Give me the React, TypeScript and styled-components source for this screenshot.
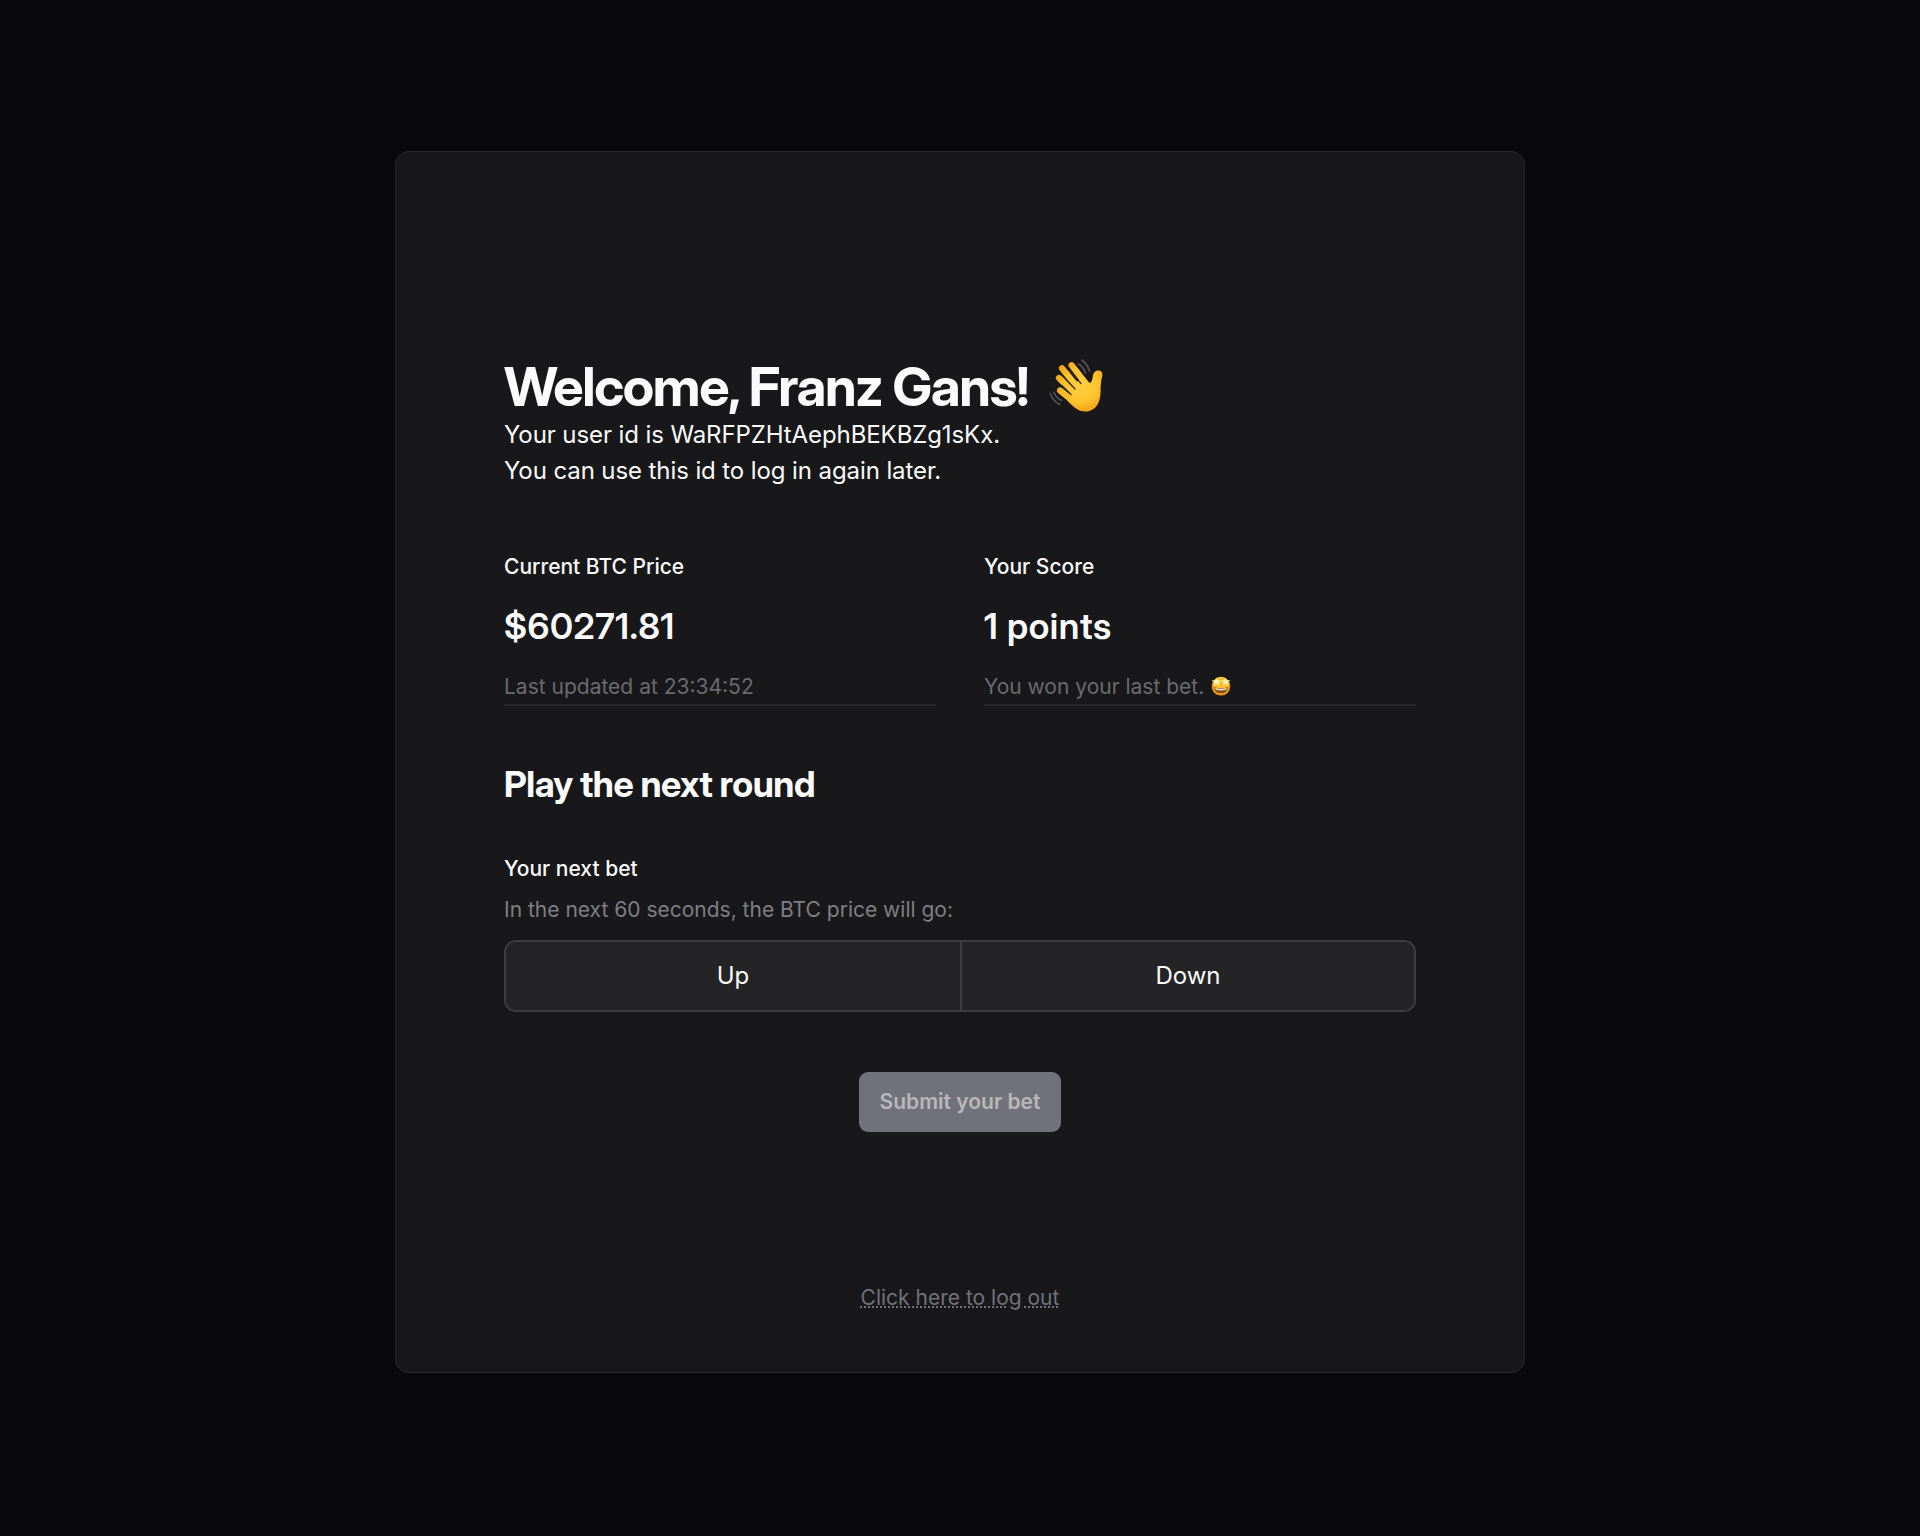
import React from "react";
import styled, { createGlobalStyle } from "styled-components";

const displayFont = `"Inter Display", Inter, "Liberation Sans", sans-serif`;

const GlobalStyle = createGlobalStyle`
  *, *::before, *::after { box-sizing: border-box; }
  body {
    margin: 0;
    background: #09090b;
    color: #fafafa;
    font-family: Inter, "Liberation Sans", sans-serif;
    font-size: 24px;
    line-height: 36px;
    -webkit-font-smoothing: antialiased;
  }
  h1, h2, p { margin: 0; }
`;

const Page = styled.main`
  min-height: 1536px;
  padding-top: 151px;
  display: flex;
  justify-content: center;
  align-items: flex-start;
`;

const Card = styled.section`
  width: 1130px;
  height: 1222px;
  padding: 205px 108px 0;
  display: flex;
  flex-direction: column;
  background: #18181a;
  border: 1px solid #28282b;
  border-radius: 14px;
`;

const Title = styled.h1`
  display: flex;
  align-items: center;
  gap: 20.5px;
  font-family: ${displayFont};
  font-size: 54px;
  line-height: 60px;
  font-weight: 700;
  letter-spacing: -0.025em;
`;

const Intro = styled.p`
  letter-spacing: -0.004em;
`;

const WaveIcon = styled.svg`
  width: 54px;
  height: 54px;
  margin-top: -2px;
`;

const Stats = styled.div`
  display: grid;
  grid-template-columns: 1fr 1fr;
  gap: 48px;
  margin-top: 63px;
`;

const Stat = styled.div`
  height: 154px;
  display: flex;
  flex-direction: column;
  border-bottom: 2px solid #28282b;
`;

const Label = styled.div`
  font-size: 21px;
  line-height: 30px;
  font-weight: 500;
`;

const Value = styled.div`
  margin: 20px 0 22px;
  font-family: ${displayFont};
  font-size: 36px;
  line-height: 48px;
  font-weight: 600;
  letter-spacing: 0.0165em;
`;

const Hint = styled.div`
  display: flex;
  align-items: center;
  gap: 7px;
  font-size: 21px;
  line-height: 30px;
  color: #6a6a6f;
`;

const Description = styled(Hint)`
  margin-top: 11px;
  color: #7f7f84;
`;

const StarFace = styled.svg`
  width: 20px;
  height: 20px;
  margin-top: -3px;
`;

const Subtitle = styled.h2`
  margin-top: 54px;
  font-family: ${displayFont};
  font-size: 36px;
  line-height: 48px;
  font-weight: 700;
  letter-spacing: -0.013em;
`;

const BetForm = styled.form`
  margin-top: 46px;
  display: flex;
  flex-direction: column;
`;

const Choices = styled.div`
  display: grid;
  grid-template-columns: 1fr 1fr;
  height: 72px;
  margin-top: 15px;
  border: 2px solid #3d3d40;
  border-radius: 12px;
  overflow: hidden;
`;

const Choice = styled.button`
  border: 0;
  background: #242426;
  color: #fafafa;
  font: inherit;
  & + & { border-left: 2px solid #3d3d40; }
`;

const Submit = styled.button`
  align-self: center;
  width: 202px;
  height: 60px;
  margin-top: 60px;
  padding: 0;
  border: 0;
  border-radius: 9px;
  background: #717179;
  color: #b8b8b9;
  font: 600 21px/30px Inter, "Liberation Sans", sans-serif;
`;

const Logout = styled.a`
  align-self: center;
  margin-top: 151px;
  font-size: 21px;
  line-height: 30px;
  color: #717179;
  text-decoration: underline dotted;
  text-decoration-thickness: 2px;
`;

const Wave = () => (
  <WaveIcon viewBox="0 0 54 54" aria-label="Waving hand">
    <defs>
      <radialGradient id="skin" gradientUnits="userSpaceOnUse" cx="32" cy="26" r="30">
        <stop offset="0" stopColor="#ffcf3f" />
        <stop offset="0.55" stopColor="#ffc530" />
        <stop offset="1" stopColor="#ee9a0c" />
      </radialGradient>
    </defs>
    <g fill="none" stroke="url(#skin)" strokeWidth="6.2" strokeLinecap="round">
      <path d="M13 9.200 29 29M22.500 6.200 38 26M10 19 26 35M11 31.500 24 42" />
    </g>
    <path fill="url(#skin)" d="M24 25 35 18 40 24C43 23.500 43.500 20 43.800 17.200 44.300 13 47 11.200 50 11.600 53.300 12.200 53.900 15 53.100 18 52 22 51.600 26 51.600 31 51.700 42 48.200 52 36.500 52.600 29 52.600 23 47 18 41Z" />
    <path fill="none" stroke="#3d2d15" strokeWidth="1.300" strokeLinecap="round" d="m13.500 16.500 12.500 13.500M20.500 11.500 32 24.500M13 26.500 22 35.500" />
    <g fill="none" stroke="#505154" strokeWidth="1.800" strokeLinecap="round">
      <path d="M33 1.200Q38.500 5.500 40.500 12M29.500 5Q34.500 8 36.300 13.800M1.200 34.500Q4 42.200 10.800 45.400M5 33.500Q7 39 12.500 41.300" />
    </g>
  </WaveIcon>
);

const Starstruck = () => (
  <StarFace viewBox="0 0 20 20" aria-label="Star-struck face">
    <circle cx="10" cy="10.300" r="9.300" fill="#ee9716" />
    <circle cx="10" cy="8.200" r="7.400" fill="#fbbf30" />
    <path fill="#fff1b0" d="m5.500 1.400 1.300 2.800 3.200.2-2.300 2.200.7 3-2.900-1.500-3 1.500.7-3L.5 4.400l3.400-.2ZM14.500 1.400l1.300 2.800 3.700.2-2.500 2.200.7 3-2.900-1.500-3 1.500.7-3L10 4.400l3.200-.2Z" />
    <path fill="#83500d" d="M3.300 11.300q6.700 1.800 13.400 0-.5 6-6.700 6t-6.700-6Z" />
    <path fill="#e9dfcb" d="M4 12q6 1.600 12 0l-.8 1.800q-5.200 1.300-10.400 0Z" />
  </StarFace>
);

export default function App() {
  return (
    <>
      <GlobalStyle />
      <Page>
        <Card>
          <Title>
            <span>Welcome, Franz Gans!</span>
            <Wave />
          </Title>
          <Intro>Your user id is WaRFPZHtAephBEKBZg1sKx.</Intro>
          <Intro>You can use this id to log in again later.</Intro>
          <Stats>
            <Stat>
              <Label>Current BTC Price</Label>
              <Value>$60271.81</Value>
              <Hint>Last updated at 23:34:52</Hint>
            </Stat>
            <Stat>
              <Label>Your Score</Label>
              <Value>1 points</Value>
              <Hint>
                <span>You won your last bet.</span>
                <Starstruck />
              </Hint>
            </Stat>
          </Stats>
          <Subtitle>Play the next round</Subtitle>
          <BetForm>
            <Label>Your next bet</Label>
            <Description>In the next 60 seconds, the BTC price will go:</Description>
            <Choices>
              <Choice type="button">Up</Choice>
              <Choice type="button">Down</Choice>
            </Choices>
            <Submit type="button">Submit your bet</Submit>
          </BetForm>
          <Logout>Click here to log out</Logout>
        </Card>
      </Page>
    </>
  );
}
